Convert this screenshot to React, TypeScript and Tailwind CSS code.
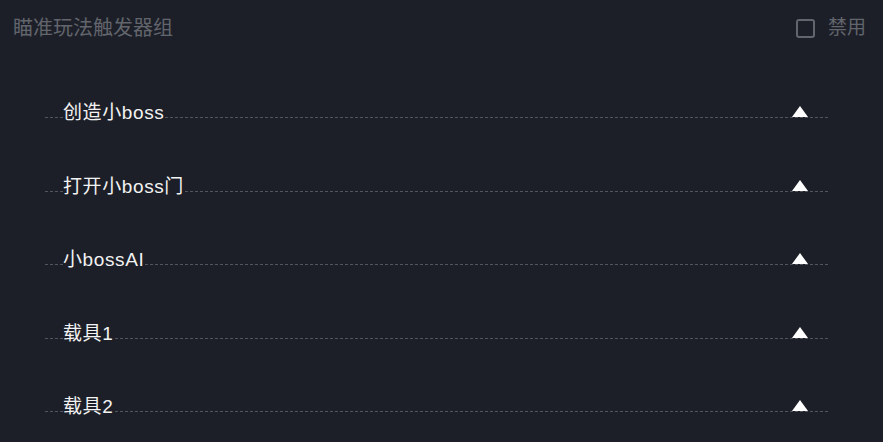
import { Fragment } from 'react'

const TRIGGERS = ['创造小boss', '打开小boss门', '小bossAI', '载具1', '载具2']

const FONT = "font-['Liberation_Sans','Noto_Sans_CJK_SC',sans-serif]"

function TriggerRow({ name }: { name: string }) {
  return (
    <div className="h-[73.5px] pt-[48px]">
      <div className="ml-[45px] mr-[55px] h-[14px] flex items-end justify-between border-b border-dashed border-[#52555d]">
        <span className="ml-[18px] translate-y-[7px] bg-[#1c1f28] text-[19px] leading-[22px] tracking-[0.6px] text-[#f2f2f2]">
          {name}
        </span>
        <span className="mr-[20px] w-0 h-0 border-x-[8px] border-x-transparent border-b-[11px] border-b-white" />
      </div>
    </div>
  )
}

export default function App() {
  return (
    <div className={`w-[883px] h-[442px] bg-[#1c1f28] overflow-hidden ${FONT}`}>
      <div className="h-[56px] flex items-center justify-between pl-[13px] pr-[17px]">
        <span className="text-[20px] text-[#62656c]">瞄准玩法触发器组</span>
        <label className="flex items-center gap-[13px] text-[19px] text-[#62656c]">
          <span className="w-[19px] h-[19px] rounded-[3px] border-2 border-[#62656c]" />
          禁用
        </label>
      </div>
      <div>
        {TRIGGERS.map(t => (
          <Fragment key={t}>
            <TriggerRow name={t} />
          </Fragment>
        ))}
      </div>
    </div>
  )
}
